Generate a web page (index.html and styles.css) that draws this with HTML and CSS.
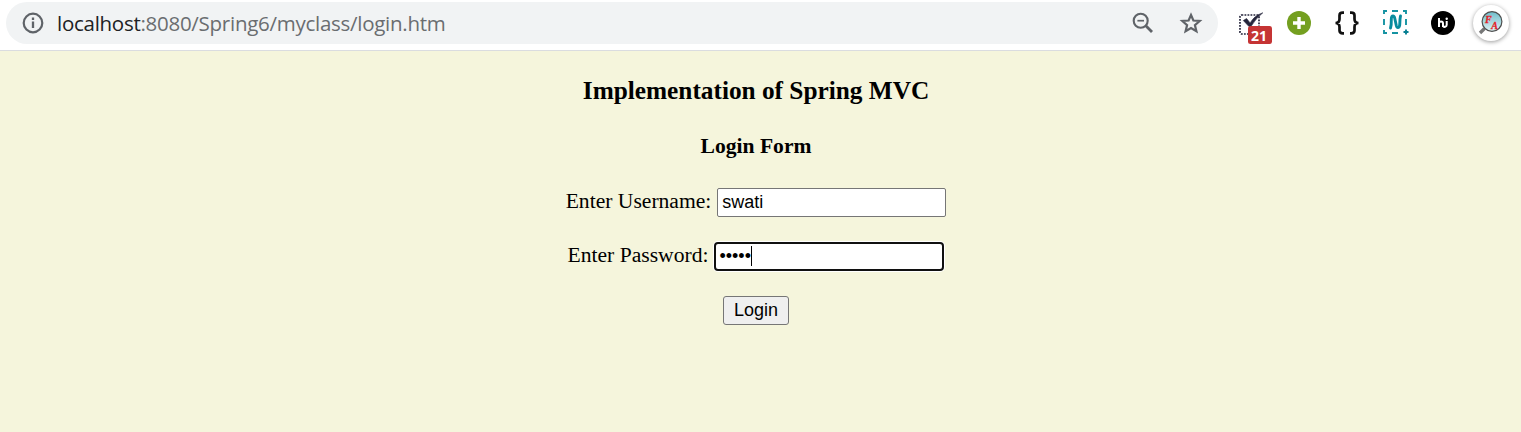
FILE: index.html
```html
<!DOCTYPE html>
<html lang="en">
<head>
<meta charset="utf-8">
<title>Login Form</title>
<link rel="stylesheet" href="styles.css">
</head>
<body>
<header class="toolbar">
  <div class="omnibox">
    <svg class="info" width="22" height="22" viewBox="0 0 22 22"><circle cx="11" cy="11" r="9.300" fill="none" stroke="#5f6368" stroke-width="2.200"/><path d="M11 9.600V16M11 5.600V8" stroke="#5f6368" stroke-width="2.300"/></svg>
    <div class="url"><span class="host">localhost</span>:8080/Spring6/myclass/login.htm</div>
    <svg class="lens" width="22" height="22" viewBox="0 0 22 22"><circle cx="8.700" cy="8.700" r="7" fill="none" stroke="#5f6368" stroke-width="2.100"/><path d="M5.400 8.700h6.600" stroke="#5f6368" stroke-width="1.700"/><path d="M13.600 13.600L20 20" stroke="#5f6368" stroke-width="2.800"/></svg>
    <svg class="star" width="24" height="24" viewBox="0 0 24 24"><path fill="none" stroke="#5f6368" stroke-width="2.200" d="M12 4l2.400 5.500 6.300.5-4.800 4.100 1.500 6.200L12 17.100l-5.400 3.200 1.500-6.200L3.300 10l6.300-.5z"/></svg>
  </div>
  <div class="extensions">
    <svg width="36" height="36" viewBox="0 0 36 36"><rect x="3" y="7" width="19" height="19" rx="1.500" fill="none" stroke="#25253b" stroke-width="1.700" stroke-dasharray="1.800 1.200"/><path d="M6.300 12.500l3.300-2 3.500 4.400Q17.500 7.500 25.800 4.800 19.200 10 14 18.400l-2 .2z" fill="#25253b" stroke="#25253b" stroke-width=".6"/><rect x="11" y="18" width="24" height="18" rx="2.500" fill="#c53434"/><text class="badge-text" x="22" y="33" text-anchor="middle">21</text></svg>
    <svg width="24" height="24" viewBox="0 0 24 24"><circle cx="12" cy="12" r="12" fill="#749f20"/><path d="M12 6v12M6 12h12" stroke="#fff" stroke-width="3.400"/></svg>
    <svg width="24" height="24" viewBox="0 0 24 24"><path d="M9 1.700H7.800Q4.500 1.700 4.500 4.500V8Q4.500 12 .5 12q4 0 4 4v3.500q0 2.800 3.300 2.800H9M15 1.700h1.200q3.300 0 3.300 2.800V8q0 4 4 4-4 0-4 4v3.500q0 2.800-3.300 2.800H15" fill="none" stroke="#111" stroke-width="2.700"/></svg>
    <svg width="26" height="26" viewBox="0 0 26 26"><path d="M1 4V1h3M9 1h6M20 1h3v3M1 9v6M1 20v3h3M9 23h6M23 9v6" fill="none" stroke="#1493a2" stroke-width="1.900"/><path d="M23 19.500v5M20.500 22h5" stroke="#087f92" stroke-width="1.900"/><path d="M7.500 18q1-3 .8-8.500Q8.300 6 10 6q1.300 0 1.800 2.500l1.500 7q.6 2.500 2 2 1.500-.6 1.500-4 0-4.500.7-7.500" fill="none" stroke="#078b9d" stroke-width="2.900" stroke-linecap="round" stroke-linejoin="round"/></svg>
    <svg width="24" height="24" viewBox="0 0 24 24"><circle cx="12" cy="12" r="12" fill="#000"/><path d="M8 7v9M8 12.500q0-2 2-2t2 2V16M12 15q1.200 1.300 2.500.7 1.200-.5 1.200-2V10" fill="none" stroke="#fff" stroke-width="2"/><circle cx="15.700" cy="7.800" r="1.200" fill="#fff"/></svg>
    <div class="active-extension">
      <svg width="26" height="26" viewBox="0 0 26 26"><defs><linearGradient id="glass" x2="0" y2="1"><stop stop-color="#6fbdcb"/><stop offset="1" stop-color="#e0f2f4"/></linearGradient></defs><path d="M6.500 18.500L2 23" stroke="#777" stroke-width="3.400"/><circle cx="14" cy="11.500" r="9.900" fill="url(#glass)" stroke="#4e4e4e" stroke-width="1.200"/><text class="fa" x="7" y="12.500">F</text><text class="fa" x="13.300" y="18.500">A</text></svg>
    </div>
  </div>
</header>
<main>
  <h3>Implementation of Spring MVC</h3>
  <h4>Login Form</h4>
  <form>
    <div class="row"><label for="user">Enter Username:</label><input id="user" class="field" type="text" value="swati"></div>
    <div class="row"><label>Enter Password:</label><div class="field focused"><span>•••••</span><i class="caret"></i></div></div>
    <button type="button">Login</button>
  </form>
</main>
</body>
</html>
```
FILE: styles.css
```css
* { box-sizing: border-box; }
body { margin: 0; height: 432px; background: #f5f5dc; overflow: hidden; color: #000; font: 21.6px/25px "Liberation Serif", serif; }
svg { display: block; flex: none; }
.toolbar { height: 51px; background: #fff; border-bottom: 1px solid #dadce0; display: flex; align-items: flex-start; padding: 2px 0 0 6px; }
.omnibox { width: 1212px; height: 42px; border-radius: 21px; background: #f1f3f4; display: flex; align-items: center; padding: 0 15px 0 16px; }
.url { flex: 1; margin-left: 13px; font: 20.5px/30px "Open Sans", sans-serif; color: #6a6d70; white-space: nowrap; letter-spacing: -0.27px; }
.host { color: #202124; }
.star { margin-left: 25px; }
.extensions { height: 42px; display: flex; align-items: center; margin-left: 19px; gap: 24px; }
.extensions > svg:first-child { margin: 5px -10px 0 0; }
.extensions > svg:nth-child(4) { margin-right: -2px; }
.badge-text { font: 700 14px "Open Sans", sans-serif; fill: #fff; }
.active-extension { width: 36px; height: 36px; margin-left: -6px; border-radius: 50%; background: #fff; display: grid; place-items: center; box-shadow: 0 1px 4px #0006; }
.fa { font: italic 700 10px/1 "Liberation Serif", serif; fill: #e31f29; stroke: #e31f29; stroke-width: .3px; }
main { width: 1512px; padding-top: 25px; display: flex; flex-direction: column; align-items: center; }
h3 { margin: 0; font-size: 25.3px; line-height: 29px; }
h4 { margin: 29px 0 29px; font-size: 21.6px; line-height: 25px; }
form { display: flex; flex-direction: column; align-items: center; }
.row { height: 29px; margin-bottom: 25px; display: flex; gap: 6px; }
label { line-height: 26px; }
.field { width: 229px; height: 29px; padding: 0 4px; border: 1px solid #767676; border-radius: 2px; background: #fff; color: #000; font: 18px/27px "Liberation Sans", sans-serif; outline: none; }
.focused { width: 230px; padding: 0 3px; border: 2px solid #101010; border-radius: 4px; box-shadow: 0 0 0 1px #fff; display: flex; align-items: center; }
.focused span { font-size: 18px; }
.caret { width: 1px; height: 20px; margin-top: -1px; background: #000; }
button { width: 66px; height: 29px; padding: 0 0 1px; border: 1px solid #767676; border-radius: 3px; background: #efefef; color: #000; font: 18px/26px "Liberation Sans", sans-serif; }
```
